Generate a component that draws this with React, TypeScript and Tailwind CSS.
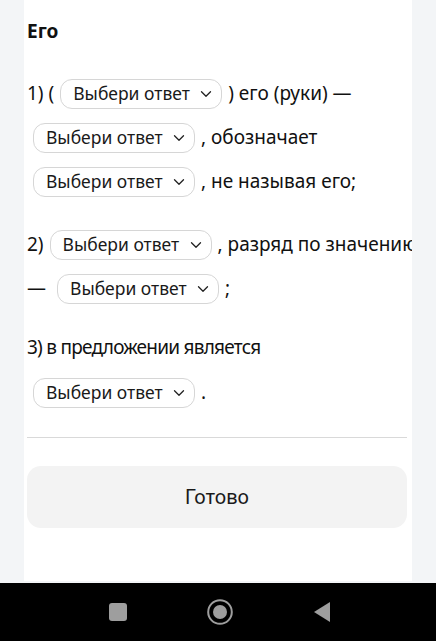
import type { ReactNode } from 'react';

function Chevron() {
  return (
    <svg width="12" height="8" viewBox="0 0 12 8" fill="none" className="flex-shrink-0">
      <path d="M1.5 1.8 6 6.2l4.5-4.4" stroke="#222" strokeWidth="1.3" strokeLinecap="round" strokeLinejoin="round" />
    </svg>
  );
}

function Select() {
  return (
    <span className="mx-[6px] inline-flex h-[30px] w-[162px] flex-shrink-0 items-center justify-between rounded-[12px] border border-[#d6d6d6] bg-white pl-[12px] pr-[9px] align-middle tracking-normal">
      <span className="text-[17.5px] text-[#1a1a1a]">Выбери ответ</span>
      <Chevron />
    </span>
  );
}

function Line({ children }: { children: ReactNode }) {
  return <div className="flex h-[44px] items-center whitespace-nowrap">{children}</div>;
}

export default function App() {
  return (
    <div className="flex h-[641px] w-[436px] flex-col bg-[#f3f5f7]" style={{ fontFamily: '"Noto Sans", sans-serif' }}>
      <div className="mx-[24px] flex flex-1 flex-col overflow-hidden bg-white px-[3px] pb-[53px] text-[19px] text-[#111]">
        <div className="mt-[17px] text-[19px] font-bold">Его</div>

        <div className="mt-[26px]">
          <Line>
            <span>1) (</span>
            <Select />
            <span>) его (руки) —</span>
          </Line>
          <Line>
            <Select />
            <span>, обозначает</span>
          </Line>
          <Line>
            <Select />
            <span>, не называя его;</span>
          </Line>
        </div>

        <div className="mt-[19px]">
          <Line>
            <span>2)</span>
            <Select />
            <span>, разряд по значению —</span>
          </Line>
          <Line>
            <span className="mr-[5px]">—</span>
            <Select />
            <span>;</span>
          </Line>
        </div>

        <div className="mt-[15px]">
          <Line>
            <span className="tracking-[-0.75px]">3) в предложении является</span>
          </Line>
          <div className="h-[1px]" />
          <Line>
            <Select />
            <span>.</span>
          </Line>
        </div>

        <div className="mt-[22px] mr-[2px] h-px bg-[#d9d9d9]" />

        <button className="mt-[28px] mr-[2px] flex h-[62px] items-center justify-center rounded-[14px] bg-[#f3f3f3] text-[20px] text-[#1a1a1a]" style={{ fontFamily: 'Roboto, sans-serif' }}>
          Готово
        </button>
      </div>
      <div className="h-[2px]" />
      <div className="flex h-[58px] items-center bg-black">
        <div className="flex w-full items-center justify-center gap-[80px] pl-[4px]">
          <div className="h-[18px] w-[18px] rounded-[3px] bg-[#9e9e9e]" />
          <svg width="26" height="26" viewBox="0 0 26 26">
            <circle cx="13" cy="13" r="11.8" fill="none" stroke="#9e9e9e" strokeWidth="2" />
            <circle cx="13" cy="13" r="7" fill="#9e9e9e" />
          </svg>
          <svg width="18" height="22" viewBox="0 0 18 22">
            <path d="M17 1v20L1 11z" fill="#9e9e9e" />
          </svg>
        </div>
      </div>
    </div>
  );
}
